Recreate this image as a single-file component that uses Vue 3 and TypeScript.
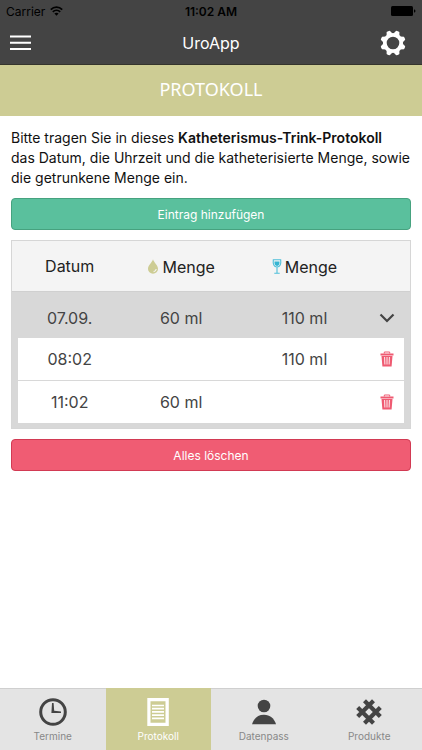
<script setup lang="ts">
import { ref } from 'vue'

interface Entry {
  time: string
  urine?: number
  drink?: number
}

const entries = ref<Entry[]>([
  { time: '08:02', drink: 110 },
  { time: '11:02', urine: 60 },
])
const open = ref(true)

const tabs = [
  { id: 'termine', label: 'Termine' },
  { id: 'protokoll', label: 'Protokoll' },
  { id: 'datenpass', label: 'Datenpass' },
  { id: 'produkte', label: 'Produkte' },
]
const active = ref('protokoll')

function sum(key: 'urine' | 'drink'): number {
  return entries.value.reduce((total, entry) => total + (entry[key] ?? 0), 0)
}

function amount(value?: number): string {
  return value ? `${value} ml` : ''
}
</script>

<template>
  <div class="app">
    <header class="top">
      <div class="status">
        <div class="carrier">
          <span>Carrier</span>
          <svg width="13" height="10" viewBox="0 0 13 10" fill="none" stroke="#000" stroke-width="1.7">
            <path d="M0.8 3.6C4 .4 9 .4 12.2 3.6M2.8 5.9c2.1-2 5.3-2 7.4 0" />
            <path d="M6.5 9.8L4.4 7.6c1.2-1 3-1 4.2 0z" fill="#000" stroke="none" />
          </svg>
        </div>
        <span class="clock">11:02 AM</span>
        <svg class="battery" width="25" height="10" viewBox="0 0 25 10">
          <rect width="22" height="10" rx="1.5" />
          <path d="M23 3.3c2 .5 2 2.900 0 3.400z" />
        </svg>
      </div>
      <div class="bar">
        <button class="icon-button" aria-label="Menü">
          <svg width="21" height="16" viewBox="0 0 21 16" fill="#fff">
            <path d="M0 .5h21v2H0zM0 6.800h21v2H0zM0 13h21v2H0z" />
          </svg>
        </button>
        <h1>UroApp</h1>
        <button class="icon-button end" aria-label="Einstellungen">
          <svg width="26" height="26" viewBox="-13 -13 26 26">
            <circle r="8.200" fill="none" stroke="#fff" stroke-width="3.800" />
            <g fill="#fff">
              <path
                v-for="n in 8"
                :key="n"
                d="M-3.200-9L-1.700-12.500Q0-13 1.700-12.500L3.200-9z"
                :transform="`rotate(${n * 45 - 22.5})`"
              />
            </g>
          </svg>
        </button>
      </div>
    </header>

    <h2>PROTOKOLL</h2>

    <main>
      <p>
        Bitte tragen Sie in dieses <strong>Katheterismus-Trink-Protokoll</strong><br />
        das Datum, die Uhrzeit und die katheterisierte Menge, sowie die getrunkene Menge ein.
      </p>
      <button class="action add">Eintrag hinzufügen</button>

      <table>
        <colgroup>
          <col class="c-date" />
          <col class="c-urine" />
          <col class="c-drink" />
          <col />
        </colgroup>
        <thead>
          <tr>
            <th scope="col">Datum</th>
            <th scope="col">
              <span class="head">
                <svg width="12" height="15" viewBox="0 0 12 15">
                  <path d="M6 .3C5.200 3.500 1 6.300 1 10a5 4.700 0 0 0 10 0C11 6.300 6.800 3.500 6 .3z" fill="#cdcc94" />
                  <path d="M9.200 10c-.2 1.400-1.100 2.300-2.600 2.600" fill="none" stroke="#f4f4f4" stroke-width="1.200" />
                </svg>
                Menge
              </span>
            </th>
            <th scope="col">
              <span class="head">
                <svg width="10" height="15" viewBox="0 0 10 15">
                  <path d="M1.300.7h7.400c.5 4.300-.6 7.300-3.700 7.300S.8 5 1.300.7zM5 8v6M2.300 14.200h5.400" fill="none" stroke="#4dbfd9" stroke-width="1.100" />
                  <path d="M2.500 2.500h5c.2 2.800-.6 4.400-2.500 4.400S2.300 5.300 2.500 2.500z" fill="#35b5d2" />
                </svg>
                Menge
              </span>
            </th>
            <th></th>
          </tr>
        </thead>
        <tbody>
          <tr class="day">
            <td>07.09.</td>
            <td>{{ amount(sum('urine')) }}</td>
            <td>{{ amount(sum('drink')) }}</td>
            <td>
              <button class="icon-button" aria-label="Tag auf- oder zuklappen" @click="open = !open">
                <svg width="16" height="10" viewBox="0 0 16 10" fill="none" stroke="#444" stroke-width="2.200">
                  <path d="M1.500 1.500L8 8l6.500-6.500" />
                </svg>
              </button>
            </td>
          </tr>
          <template v-if="open">
            <tr v-for="entry in entries" :key="entry.time" class="entry">
              <td>{{ entry.time }}</td>
              <td>{{ amount(entry.urine) }}</td>
              <td>{{ amount(entry.drink) }}</td>
              <td>
                <button class="icon-button" aria-label="Eintrag löschen">
                  <svg width="14" height="16" viewBox="0 0 14 16">
                    <path d="M4.300 2.500V1h5.400v1.500" fill="none" stroke="#ef5b72" />
                    <path d="M.5 2.500h13v2H.5zM1.500 5h11l-.9 10.500H2.400z" fill="#ef5b72" />
                    <path d="M4.600 6l.3 7.500M7 6v7.500M9.400 6l-.3 7.500" stroke="#fff" stroke-width=".9" />
                  </svg>
                </button>
              </td>
            </tr>
          </template>
        </tbody>
      </table>

      <button class="action clear">Alles löschen</button>
    </main>

    <nav>
      <a
        v-for="tab in tabs"
        :key="tab.id"
        :href="`#${tab.id}`"
        :class="{ active: active === tab.id }"
        @click.prevent="active = tab.id"
      >
        <svg v-if="tab.id === 'termine'" width="28" height="28" viewBox="0 0 28 28">
          <circle cx="14" cy="14" r="12.300" fill="none" stroke="currentColor" stroke-width="3" />
          <path d="M13 5h1.600l.6 7.800 6.800.6v1.500H12.400z" fill="currentColor" />
        </svg>
        <svg v-else-if="tab.id === 'protokoll'" width="28" height="28" viewBox="0 0 28 28">
          <path d="M3.300 0h21.500v28H3.300zM6.500 3.300v21.400h15V3.300z" fill="currentColor" fill-rule="evenodd" />
          <path d="M8 7.500h12M8 10.700h12M8 13.900h12M8 17.100h12M8 20.300h12" stroke="currentColor" stroke-width="1.700" />
        </svg>
        <svg v-else-if="tab.id === 'datenpass'" width="28" height="28" viewBox="0 0 28 28" fill="currentColor">
          <circle cx="14" cy="8" r="6.300" />
          <path d="M2 26.200C4 20.300 8 16.800 14 16.800s10 3.500 12 9.400z" />
        </svg>
        <svg v-else width="28" height="28" viewBox="-14 -14 28 28" fill="none" stroke="currentColor">
          <path
            d="M-4.500-11.300L11.300 4.500M4.500-11.300L-11.300 4.500M-11.300-4.500L4.500 11.300M11.300-4.500L-4.500 11.300"
            stroke-width="4.200"
          />
        </svg>
        <span>{{ tab.label }}</span>
      </a>
    </nav>
  </div>
</template>

<style>
body {
  background: #fff;
}
</style>

<style scoped>
.app {
  display: flex;
  flex-direction: column;
  min-height: 100vh;
  font-family: Inter, "Liberation Sans", sans-serif;
  font-size: 16px;
  color: #111;
}

button {
  font: inherit;
  cursor: pointer;
}

.top {
  background: #444;
  border-bottom: 1px solid #35342c;
}

.status {
  display: grid;
  grid-template-columns: 1fr auto 1fr;
  align-items: center;
  height: 22px;
  padding: 0 6px;
  font-size: 12px;
  color: #000;
}

.carrier {
  display: flex;
  align-items: center;
  gap: 5px;
}

.clock {
  font-weight: 600;
}

.battery {
  justify-self: end;
}

.bar {
  display: grid;
  grid-template-columns: 1fr auto 1fr;
  align-items: center;
  height: 42px;
  padding: 0 10px;
}

h1 {
  margin: 0;
  font-size: 16px;
  font-weight: 400;
  color: #fff;
}

.icon-button {
  display: flex;
  padding: 0;
  border: 0;
  background: none;
}

.end {
  justify-self: end;
  margin-right: 6px;
}

h2 {
  margin: 0;
  padding-bottom: 2px;
  background: #cdcc94;
  color: #fff;
  font-family: "Noto Sans", "Open Sans", sans-serif;
  font-size: 18px;
  font-weight: 400;
  line-height: 49px;
  text-align: center;
}

main {
  flex: 1;
  display: flex;
  flex-direction: column;
  gap: 10px;
  padding: 12px 11px;
}

p {
  margin: 0;
  font-size: 14px;
  line-height: 20px;
}

strong {
  font-weight: 600;
}

.action {
  height: 32px;
  border: 1px solid;
  border-radius: 4px;
  font-size: 12px;
  color: #fff;
}

.add {
  background: #5ac09d;
  border-color: #46a27f;
}

.clear {
  background: #f05c73;
  border-color: #d23a53;
}

table {
  width: 100%;
  table-layout: fixed;
  border: 1px solid #d6d6d6;
  border-collapse: separate;
  border-spacing: 0;
  background: #d8d8d8;
  padding-bottom: 5px;
  color: #444;
}

.c-date {
  width: 29%;
}

.c-urine {
  width: 27%;
}

.c-drink {
  width: 35%;
}

th,
td {
  padding: 0;
  text-align: center;
}

th {
  height: 50px;
  background: #f4f4f4;
  border-bottom: 1px solid #d0d0d0;
  font-weight: 400;
  color: #222;
}

.head {
  display: inline-flex;
  align-items: center;
  gap: 3px;
  vertical-align: middle;
}

.day td {
  height: 40px;
  padding-top: 6px;
}

.entry td {
  height: 42px;
  background: #fff;
}

.entry + .entry td {
  border-top: 1px solid #d8d8d8;
}

.entry td:first-child {
  box-shadow: inset 6px 0 #d8d8d8;
}

.entry td:last-child {
  box-shadow: inset -6px 0 #d8d8d8;
}

td:last-child {
  padding-right: 10px;
}

td .icon-button {
  margin: 0 auto;
}

nav {
  position: sticky;
  bottom: 0;
  display: grid;
  grid-template-columns: repeat(4, 1fr);
  background: #e4e4e4;
}

nav a {
  display: flex;
  flex-direction: column;
  align-items: center;
  gap: 3px;
  padding: 9px 0 6px;
  border-top: 1px solid #cfcfcf;
  color: #444;
  font-size: 10px;
  line-height: 15px;
  text-decoration: none;
}

nav span {
  color: #888;
}

nav .active {
  background: #cdcc94;
  border-color: #cdcc94;
  color: #fff;
}

nav .active span {
  color: #fff;
}
</style>
